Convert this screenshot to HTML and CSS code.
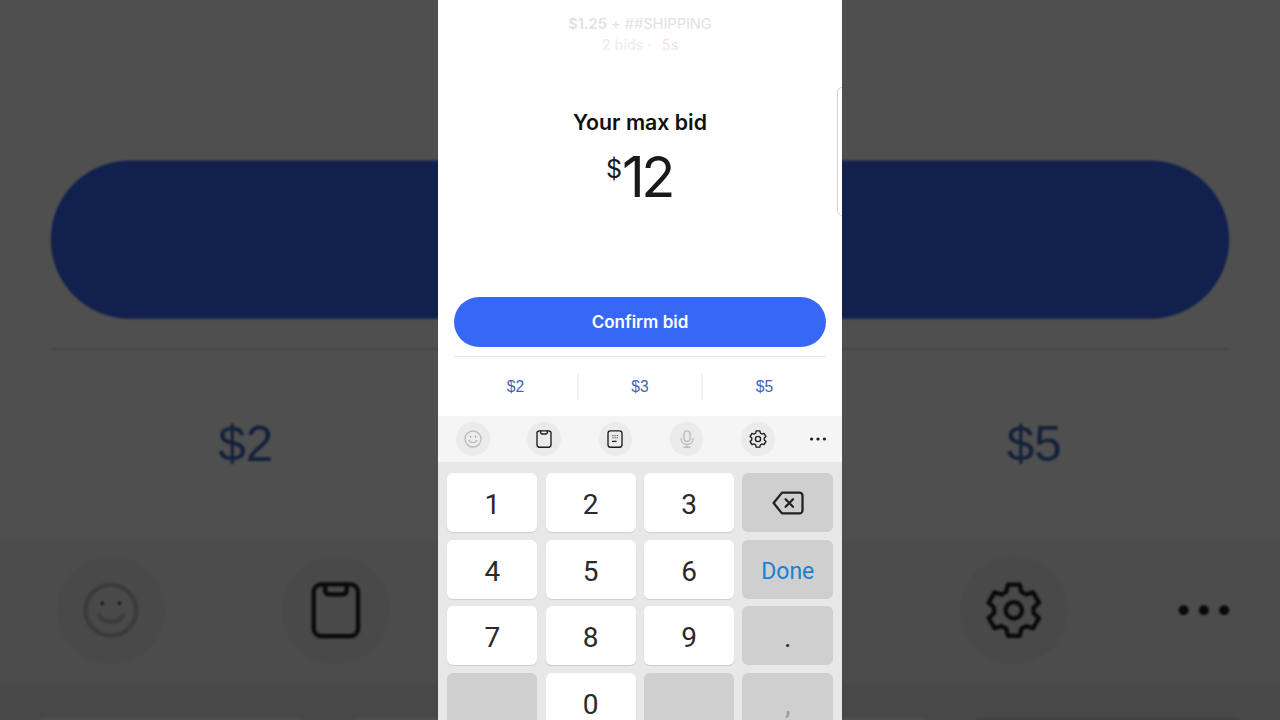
FILE: index.html
```html
<!DOCTYPE html>
<html lang="en">
<head>
    <meta charset="UTF-8">
    <meta name="viewport" content="width=device-width, initial-scale=1.0">
    <title>Your max bid</title>
    <link rel="stylesheet" href="styles.css">
</head>
<body>
    <svg class="icon-defs" aria-hidden="true">
        <symbol id="i-smile" viewBox="0 0 18 18">
            <circle cx="9" cy="9" r="8"/>
            <path d="M5.2 10.6c1 2.6 6.6 2.6 7.6 0"/>
            <circle class="solid" cx="6.3" cy="6.8" r=".5"/>
            <circle class="solid" cx="11.7" cy="6.8" r=".5"/>
        </symbol>
        <symbol id="i-clip" viewBox="0 0 18 18">
            <rect x="2" y=".8" width="14" height="16.4" rx="2.4"/>
            <path d="M5.6 1v1.6c0 .9.5 1.4 1.4 1.4h4c.9 0 1.4-.5 1.4-1.4V1"/>
        </symbol>
        <symbol id="i-keypad" viewBox="0 0 18 18">
            <rect x="2" y=".8" width="14" height="16.4" rx="2.4"/>
            <path class="thin" d="M6.4 5.6h1M8.6 5.6h1M10.8 5.6h1M6.4 7.8h1M8.6 7.8h1M10.8 7.8h1"/>
            <path d="M6.6 11.4h3.4"/>
        </symbol>
        <symbol id="i-mic" viewBox="0 0 18 18">
            <rect x="6" y=".8" width="6" height="10.6" rx="3"/>
            <path d="M3 8.4c0 8 12 8 12 0M9 14.4v2.8M6 17.2h6"/>
        </symbol>
        <symbol id="i-gear" viewBox="0 0 18 18">
            <path d="M6.64 3.16L7.13.91H10.87L11.36 3.16L12.88 4.04L15.07 3.34L16.94 6.57L15.24 8.12V9.88L16.94 11.43L15.07 14.66L12.88 13.96L11.36 14.84L10.87 17.09H7.13L6.64 14.84L5.12 13.96L2.93 14.66L1.06 11.43L2.76 9.88V8.12L1.06 6.57L2.93 3.34L5.12 4.04Z"/>
            <circle cx="9" cy="9" r="2.6"/>
        </symbol>
        <symbol id="i-more" viewBox="0 0 18 18">
            <circle class="solid" cx="2.6" cy="9" r="1.6"/>
            <circle class="solid" cx="9" cy="9" r="1.6"/>
            <circle class="solid" cx="15.4" cy="9" r="1.6"/>
        </symbol>
    </svg>

    <!-- same screen again, blown up and dimmed behind the real one -->
    <div class="phone phone-bg" aria-hidden="true">
        <div class="head"></div>
        <div class="actions">
            <div class="confirm-btn"></div>
            <div class="amounts">
                <div class="amount-btn">$2</div>
                <div class="amount-btn"></div>
                <div class="amount-btn">$5</div>
            </div>
        </div>
        <div class="toolbar">
            <span class="tool faint"><svg class="tool-icon"><use href="#i-smile"/></svg></span>
            <span class="tool"><svg class="tool-icon"><use href="#i-clip"/></svg></span>
            <span class="tool"><svg class="tool-icon"><use href="#i-keypad"/></svg></span>
            <span class="tool faint"><svg class="tool-icon"><use href="#i-mic"/></svg></span>
            <span class="tool"><svg class="tool-icon"><use href="#i-gear"/></svg></span>
            <span class="tool plain"><svg class="tool-icon"><use href="#i-more"/></svg></span>
        </div>
        <div class="keyboard">
            <div class="key"></div><div class="key"></div><div class="key"></div><div class="key dark"></div>
        </div>
    </div>

    <div class="phone">
        <div class="head">
            <p class="price"><b>$1.25</b> + ##SHIPPING</p>
            <p class="bids">2 bids · <span class="time">5s</span></p>
            <h1>Your max bid</h1>
            <p class="max-bid"><sup>$</sup>12</p>
        </div>
        <div class="sheet-edge"></div>
        <div class="actions">
            <button class="confirm-btn">Confirm bid</button>
            <div class="amounts">
                <div class="amount-btn">$2</div>
                <div class="amount-btn">$3</div>
                <div class="amount-btn">$5</div>
            </div>
        </div>
        <div class="toolbar">
            <span class="tool faint"><svg class="tool-icon"><use href="#i-smile"/></svg></span>
            <span class="tool"><svg class="tool-icon"><use href="#i-clip"/></svg></span>
            <span class="tool"><svg class="tool-icon"><use href="#i-keypad"/></svg></span>
            <span class="tool faint"><svg class="tool-icon"><use href="#i-mic"/></svg></span>
            <span class="tool"><svg class="tool-icon"><use href="#i-gear"/></svg></span>
            <span class="tool plain"><svg class="tool-icon"><use href="#i-more"/></svg></span>
        </div>
        <div class="keyboard">
            <div class="key">1</div>
            <div class="key">2</div>
            <div class="key">3</div>
            <div class="key dark">
                <svg class="backspace" viewBox="0 0 32 24">
                    <path d="M10 1.6H27.5a3 3 0 0 1 3 3V19.4a3 3 0 0 1-3 3H10L1.6 12Z"/>
                    <path d="M13.6 8.2l7.4 7.6M21 8.2l-7.4 7.6"/>
                </svg>
            </div>
            <div class="key">4</div>
            <div class="key">5</div>
            <div class="key">6</div>
            <div class="key dark done">Done</div>
            <div class="key">7</div>
            <div class="key">8</div>
            <div class="key">9</div>
            <div class="key dark">.</div>
            <div class="key dark"></div>
            <div class="key">0</div>
            <div class="key dark"></div>
            <div class="key dark comma">,</div>
        </div>
    </div>
</body>
</html>
```

FILE: styles.css
```css
body {
    margin: 0;
    height: 720px;
    overflow: hidden;
    background-color: #4f4f4f;
    font-family: Inter, "Liberation Sans", sans-serif;
    display: flex;
    justify-content: center;
}
.icon-defs {
    display: none;
}
.phone {
    position: relative;
    width: 404px;
    height: 720px;
    overflow: hidden;
    flex-shrink: 0;
    background-color: #fff;
}
.phone-bg {
    position: absolute;
    top: 0;
    left: 0;
    right: 0;
    margin: 0 auto;
    overflow: visible;
    transform: scale(3.168);
    filter: blur(.3px) brightness(.31);
}
.head {
    height: 296.5px;
    padding-top: 14px;
    box-sizing: border-box;
    text-align: center;
}
.price {
    margin: 0;
    font-size: 14.6px;
    line-height: 20px;
    color: #e2e2e2;
}
.price b {
    font-weight: 600;
}
.bids {
    margin: 1px 0 0;
    font-size: 14.5px;
    line-height: 20px;
    color: #ececec;
}
.bids .time {
    margin-left: 6px;
    color: #f5dfe3;
}
h1 {
    margin: 51px 0 0;
    font-size: 21.3px;
    font-weight: 600;
    line-height: 32px;
    color: #111;
}
.max-bid {
    margin: 7px 0 0;
    padding-right: 2px;
    font-size: 56px;
    line-height: 64px;
    letter-spacing: -3.5px;
    color: #191919;
}
.max-bid sup {
    font-size: 25px;
    line-height: 0;
    vertical-align: 19px;
    letter-spacing: 0;
}
.sheet-edge {
    position: absolute;
    top: 87px;
    right: -8px;
    width: 11px;
    height: 127px;
    border: 1px solid #d4d4d4;
    border-radius: 5px;
}
.actions {
    height: 119.5px;
    padding: 0 16.3px;
}
.confirm-btn {
    display: block;
    width: 100%;
    height: 50.5px;
    border: none;
    border-radius: 26px;
    padding: 0;
    background-color: #3668f5;
    color: #fff;
    font-family: inherit;
    font-size: 17px;
    font-weight: 600;
}
.amounts {
    display: flex;
    margin-top: 9px;
    padding-top: 17px;
    border-top: 1px solid #e6e6e6;
}
.amount-btn {
    flex: 1;
    height: 26px;
    line-height: 25px;
    text-align: center;
    font-family: "Liberation Sans", sans-serif;
    font-size: 15.6px;
    color: #3b66b8;
}
.amount-btn + .amount-btn {
    border-left: 2px solid #efefef;
}
.toolbar {
    display: flex;
    align-items: center;
    height: 46px;
    padding-left: 18.3px;
    background-color: #f5f5f5;
}
.tool {
    display: flex;
    align-items: center;
    justify-content: center;
    width: 33.5px;
    height: 33.5px;
    margin-right: 37.7px;
    border-radius: 50%;
    background-color: #ebebeb;
}
.tool.plain {
    margin: 0 0 0 -11px;
    background: none;
}
.tool-icon {
    width: 18px;
    height: 18px;
    fill: none;
    stroke: #1c1c1c;
    stroke-width: 1.35;
    stroke-linecap: round;
    stroke-linejoin: round;
}
.tool.faint .tool-icon {
    stroke: #bcbcbc;
}
.solid {
    fill: #1c1c1c;
    stroke: none;
}
.tool.faint .solid {
    fill: #bcbcbc;
}
.thin {
    stroke-width: 1;
    stroke-linecap: butt;
}
.keyboard {
    display: grid;
    grid-template-columns: repeat(3, 90px) 90.6px;
    grid-auto-rows: 59px;
    gap: 7.5px 8.4px;
    height: 258px;
    box-sizing: border-box;
    padding: 11.3px 9.3px 0;
    background-color: #e8e8e8;
}
.key {
    display: flex;
    align-items: center;
    justify-content: center;
    padding-top: 4px;
    box-sizing: border-box;
    border-radius: 6px;
    background-color: #fff;
    box-shadow: 0 1px 1px #cdcdcd;
    font-family: Roboto, sans-serif;
    font-size: 28px;
    color: #2a2a2a;
}
.key.dark {
    background-color: #cfcfcf;
    box-shadow: none;
}
.key.done {
    font-size: 23px;
    color: #1a7fd8;
}
.key.comma {
    color: #9a9a9a;
}
.backspace {
    width: 32px;
    height: 24px;
    margin-top: -4px;
    fill: none;
    stroke: #222;
    stroke-width: 2.3;
    stroke-linejoin: round;
    stroke-linecap: round;
}
```
